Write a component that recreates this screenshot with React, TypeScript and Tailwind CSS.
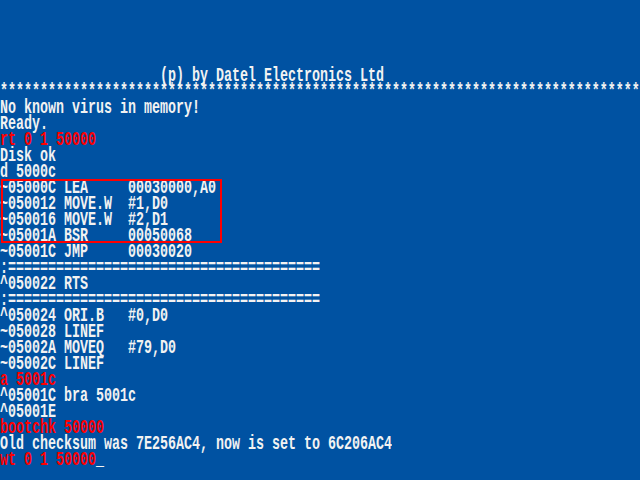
import React from "react";

type Line = { t: string; red?: boolean; cursor?: boolean };

const lines: Line[] = [
  { t: "                    (p) by Datel Electronics Ltd" },
  { t: "*".repeat(80) },
  { t: "No known virus in memory!" },
  { t: "Ready." },
  { t: "rt 0 1 50000", red: true },
  { t: "Disk ok" },
  { t: "d 5000c" },
  { t: "~05000C LEA     00030000,A0" },
  { t: "~050012 MOVE.W  #1,D0" },
  { t: "~050016 MOVE.W  #2,D1" },
  { t: "~05001A BSR     00050068" },
  { t: "~05001C JMP     00030020" },
  { t: ":" + "=".repeat(39) },
  { t: "^050022 RTS" },
  { t: ":" + "=".repeat(39) },
  { t: "^050024 ORI.B   #0,D0" },
  { t: "~050028 LINEF" },
  { t: "~05002A MOVEQ   #79,D0" },
  { t: "~05002C LINEF" },
  { t: "a 5001c", red: true },
  { t: "^05001C bra 5001c" },
  { t: "^05001E" },
  { t: "bootchk 50000", red: true },
  { t: "Old checksum was 7E256AC4, now is set to 6C206AC4" },
  { t: "wt 0 1 50000", red: true, cursor: true },
];

export default function App() {
  return (
    <div
      className="relative w-[640px] h-[480px] overflow-hidden bg-[#0052a2] pt-[68px]"
      style={{ fontFamily: '"Liberation Mono", "DejaVu Sans Mono", monospace' }}
    >
      {lines.map((l, i) => (
        <div key={i} className="h-[16px] flex items-center whitespace-pre text-[13.333px] font-bold leading-[16px]">
          <span className={`inline-block scale-y-150 leading-[10px] ${l.red ? "text-[#ff0000]" : "text-[#f2f2f2]"}`}>
            {l.t}
          </span>
          {l.cursor && <span className="inline-block scale-y-150 leading-[10px] text-[#f2f2f2]">_</span>}
        </div>
      ))}
      <div className="absolute left-[1px] top-[179px] w-[221px] h-[64px] border-2 border-[#ff0000]" />
    </div>
  );
}
